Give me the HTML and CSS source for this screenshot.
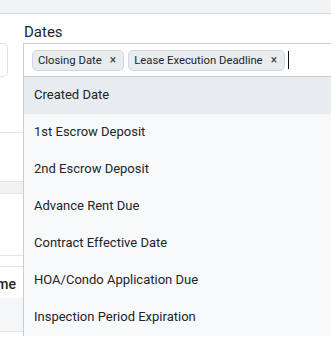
FILE: index.html
```html
<!DOCTYPE html>
<html>
<head>
<meta charset="utf-8">
<link rel="stylesheet" href="styles.css">
</head>
<body>
<div class="topbar"></div>
<div class="main">
  <div class="side">
    <div class="side-field"></div>
    <div class="side-line l1"></div>
    <div class="side-band"></div>
    <div class="side-line l2"></div>
    <div class="side-head"><span>Name</span></div>
    <div class="side-row"></div>
  </div>
  <div class="field">
    <div class="label">Dates</div>
    <div class="control">
      <div class="input">
        <span class="chip">Closing Date <span class="x">×</span></span>
        <span class="chip">Lease Execution Deadline <span class="x">×</span></span>
        <span class="cursor"></span>
      </div>
      <ul class="menu">
        <li class="item active">Created Date</li>
        <li class="item">1st Escrow Deposit</li>
        <li class="item">2nd Escrow Deposit</li>
        <li class="item">Advance Rent Due</li>
        <li class="item">Contract Effective Date</li>
        <li class="item">HOA/Condo Application Due</li>
        <li class="item">Inspection Period Expiration</li>
      </ul>
    </div>
  </div>
</div>
</body>
</html>
```

FILE: styles.css
```css
* { box-sizing: border-box; }
html, body {
  margin: 0;
  padding: 0;
  width: 331px;
  height: 340px;
  overflow: hidden;
  background: #ffffff;
  font-family: "Roboto", "Inter", "Liberation Sans", sans-serif;
  color: #212529;
}
.topbar {
  height: 14px;
  background: #f3f4f6;
  border-bottom: 1px solid #d6d8db;
}
.main {
  display: flex;
  align-items: flex-start;
}
.side {
  width: 23px;
  flex: none;
  overflow: hidden;
  display: flex;
  flex-direction: column;
}
.side-field {
  margin-top: 29px;
  width: 8px;
  height: 34px;
  border: 1px solid #dcdfe3;
  border-left: none;
  border-radius: 0 5px 5px 0;
}
.side-line {
  height: 1px;
  background: #e3e5e8;
}
.l1 { margin-top: 55px; }
.side-band {
  margin-top: 48px;
  height: 13px;
  background: #f1f2f4;
  border-top: 1px solid #e3e5e8;
  border-bottom: 1px solid #e3e5e8;
}
.l2 { margin-top: 61px; }
.side-head {
  height: 32px;
  border-top: 1px solid #e3e5e8;
  margin-top: 10px;
  display: flex;
  justify-content: flex-end;
  align-items: center;
  padding-right: 7px;
  padding-top: 3px;
  font-size: 14px;
  font-weight: 500;
  color: #212529;
  white-space: nowrap;
}
.side-head span { flex: none; }
.side-row {
  height: 34px;
  background: #f5f6f7;
  border-bottom: 1px solid #e3e5e8;
}
.field {
  flex: none;
  width: 340px;
  display: flex;
  flex-direction: column;
}
.label {
  margin-top: 9px;
  margin-left: 1px;
  font-size: 15px;
  line-height: 18px;
  height: 18px;
  margin-bottom: 2px;
  color: #212529;
}
.control {
  position: relative;
}
.input {
  height: 34px;
  border: 1px solid #c9cdd2;
  border-right: none;
  background: #fff;
  display: flex;
  align-items: center;
  gap: 4px;
  padding: 0 0 0 8px;
}
.chip {
  display: inline-flex;
  align-items: center;
  height: 21px;
  padding: 0 7px 0 5px;
  border: 1px solid #d3d7dc;
  border-radius: 5px;
  background: #e9ecef;
  font-size: 11.3px;
  color: #212529;
  white-space: nowrap;
}
.chip .x {
  margin-left: 8px;
  font-size: 12px;
  color: #343a40;
}
.cursor {
  width: 1px;
  height: 18px;
  background: #111;
  margin-left: -1px;
}
.menu {
  list-style: none;
  margin: 0;
  padding: 0;
  background: #f8f9fa;
  border-left: 1px solid #c9cdd2;
}
.item {
  height: 37px;
  line-height: 36px;
  padding-left: 10px;
  font-size: 13px;
  color: #212529;
  white-space: nowrap;
}
.item.active {
  background: #e9ecef;
}
```
